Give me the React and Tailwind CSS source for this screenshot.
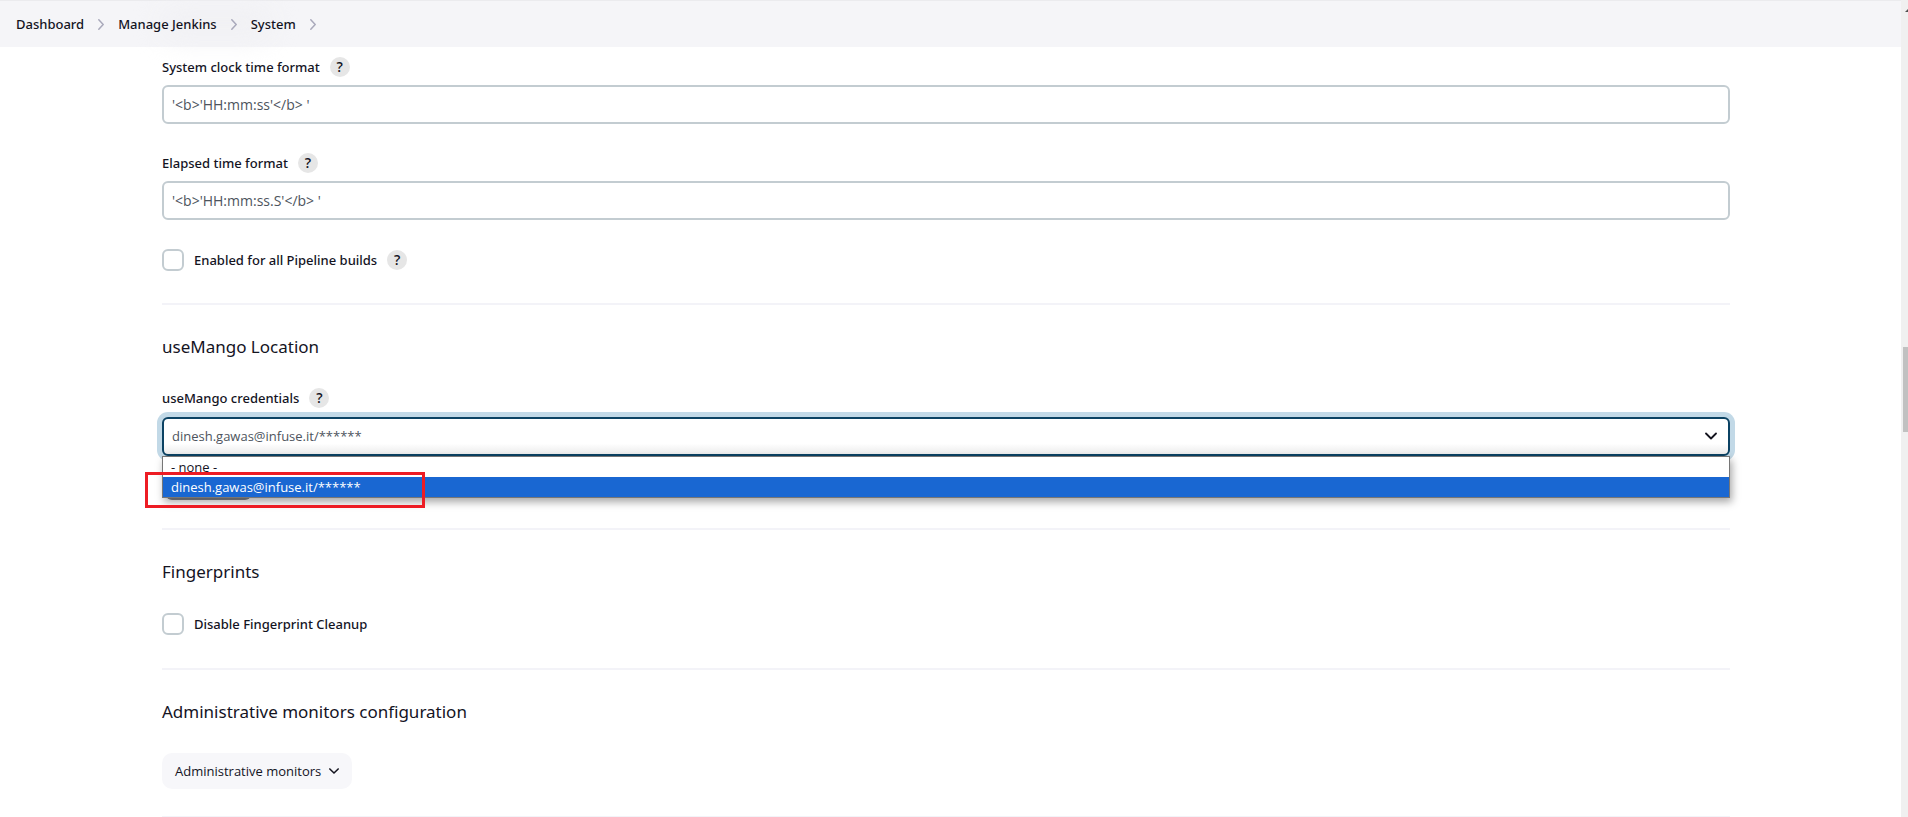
import React from 'react';
import { clsx } from 'clsx';

const crumbs = ['Dashboard', 'Manage Jenkins', 'System'];

const CREDENTIAL = 'dinesh.gawas@infuse.it/******';

const HelpButton = ({ subject }) => (
  <button
    type="button"
    aria-label={`Help for ${subject}`}
    className="flex size-5 shrink-0 items-center justify-center rounded-full bg-[#e6e6e6] text-[14px] leading-5 font-semibold text-[#14141f]"
  >
    ?
  </button>
);

const Chevron = ({ className }) => (
  <svg viewBox="0 0 12 12" fill="none" stroke="currentColor" strokeLinecap="round" strokeLinejoin="round" aria-hidden="true" className={className}>
    <path d="M1 3.5 6 8.5 11 3.5" strokeWidth="1.8" />
  </svg>
);

const Breadcrumbs = () => (
  <nav aria-label="Breadcrumb" className="relative h-[47px] border-t border-[#ebebee] bg-[#f5f5f8]">
    <div className="absolute top-1 left-40 h-9 w-28 rounded-full bg-[#f1f1f4] blur-md" />
    <ol className="relative flex h-full items-center pl-4">
      {crumbs.map((crumb) => (
        <li key={crumb} className="flex items-center">
          <a href="#" className="font-['Noto_Sans','Open_Sans',sans-serif] text-[13px] leading-5 font-medium">{crumb}</a>
          <svg viewBox="0 0 6 11" fill="none" stroke="#a9a9bb" strokeLinecap="round" strokeLinejoin="round" aria-hidden="true" className="mx-3.5 h-[11px] w-1.5">
            <path d="M0.8 0.8 5.2 5.5 0.8 10.2" strokeWidth="1.5" />
          </svg>
        </li>
      ))}
    </ol>
  </nav>
);

const FieldLabel = ({ id, children }) => (
  <div className="mb-2 flex h-5 items-center gap-2.5">
    <label htmlFor={id} className="font-['Noto_Sans','Open_Sans',sans-serif] text-[13px] leading-5 font-medium">{children}</label>
    <HelpButton subject={children} />
  </div>
);

const TextField = ({ id, label, value }) => (
  <div className="mb-[29px]">
    <FieldLabel id={id}>{label}</FieldLabel>
    <input
      id={id}
      type="text"
      defaultValue={value}
      className="block h-[39px] w-full rounded-md border-2 border-[#c3ccd1] bg-white px-2 text-[14px] text-[#4d545d]"
    />
  </div>
);

const CheckboxField = ({ id, label, help }) => (
  <div className="flex h-[22px] items-center gap-2.5">
    <input id={id} type="checkbox" className="size-[22px] appearance-none rounded-md border-2 border-[#c3ccd1] bg-white" />
    <label htmlFor={id} className="font-['Noto_Sans','Open_Sans',sans-serif] text-[13px] leading-5 font-medium">{label}</label>
    {help && <HelpButton subject={label} />}
  </div>
);

const Section = ({ title, children, className }) => (
  <section className={clsx('border-t-2 border-[#f3f3f8] pt-[30px]', className)}>
    <h2 className="mb-[29px] font-['Noto_Sans','Open_Sans',sans-serif] text-[17px] leading-6 font-normal">{title}</h2>
    {children}
  </section>
);

const CredentialsSelect = () => (
  <div className="relative pt-px">
    <select
      id="credentials"
      defaultValue={CREDENTIAL}
      className="block h-[39px] w-full appearance-none rounded-md border-2 border-[#0b4263] bg-white bg-linear-to-t from-[#ececec] to-white to-30% px-2 text-[13px] text-[#4d545d] ring-5 ring-[#c2d9e7] outline-none"
    >
      <option value="">- none -</option>
      <option>{CREDENTIAL}</option>
    </select>
    <Chevron className="pointer-events-none absolute top-[14px] right-[13px] size-3" />
    <ul role="listbox" aria-label="useMango credentials" className="absolute inset-x-0 top-10 z-10 border border-[#767676] bg-white text-[13px] leading-5 shadow-[2px_4px_8px_rgba(0,0,0,0.35)]">
      <li role="option" aria-selected="false" className="h-5 px-2">- none -</li>
      <li role="option" aria-selected="true" className="h-5 bg-[#1967d2] px-2 text-white">{CREDENTIAL}</li>
    </ul>
    <div className="pointer-events-none absolute top-14 -left-[17px] z-20 h-9 w-[280px] border-3 border-[#ed1c24]" />
  </div>
);

const ScrollTrack = () => (
  <div className="w-[7px] shrink-0 overflow-hidden bg-[#f0f0f0]">
    <svg viewBox="0 0 8 4" aria-hidden="true" className="mt-2 ml-1 h-1 w-2">
      <path d="M0 4 4 0 8 4Z" fill="#505050" />
    </svg>
    <div className="mt-[335px] ml-0.5 h-[85px] bg-[#c1c1c1]" />
  </div>
);

export default function App() {
  return (
    <div className="flex h-screen overflow-hidden bg-white font-['Open_Sans','Noto_Sans',sans-serif] text-[#14141f]">
      <div className="min-w-0 flex-1">
        <Breadcrumbs />
        <main className="pt-2.5 pr-[171px] pl-[162px]">
          <TextField id="clock-format" label="System clock time format" value="'<b>'HH:mm:ss'</b> '" />
          <TextField id="elapsed-format" label="Elapsed time format" value="'<b>'HH:mm:ss.S'</b> '" />
          <div className="pb-8">
            <CheckboxField id="pipeline-builds" label="Enabled for all Pipeline builds" help />
          </div>

          <Section title="useMango Location" className="pb-7">
            <FieldLabel id="credentials">useMango credentials</FieldLabel>
            <CredentialsSelect />
            <button type="button" aria-label="Add credentials" className="mt-2 ml-1 block h-9 w-[85px] rounded-md bg-[#85858a]" />
          </Section>

          <Section title="Fingerprints" className="pb-[33px]">
            <CheckboxField id="fingerprint-cleanup" label="Disable Fingerprint Cleanup" />
          </Section>

          <Section title="Administrative monitors configuration" className="pb-[27px]">
            <button type="button" className="flex h-9 items-center gap-2 rounded-[10px] bg-[#f7f7fa] px-[13px] text-[13px] leading-5">
              Administrative monitors
              <Chevron className="size-2.5" />
            </button>
          </Section>
          <hr className="border-t-2 border-[#f3f3f8]" />
        </main>
      </div>
      <ScrollTrack />
    </div>
  );
}
